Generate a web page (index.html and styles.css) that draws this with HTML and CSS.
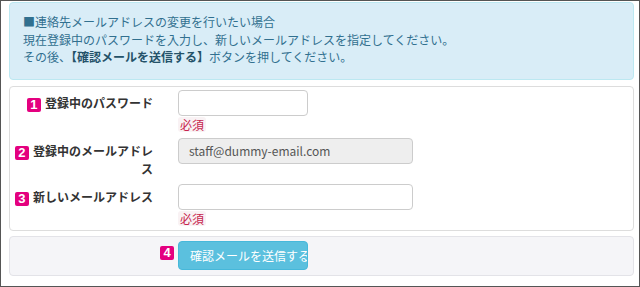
FILE: index.html
```html
<!DOCTYPE html>
<html>
<head>
    <title>メールアドレス変更</title>
    <meta charset=utf-8>
    <meta name=viewport content="width=device-width, initial-scale=1">
    <link rel="stylesheet" href="styles.css">
</head>
<body>
    <div id="frame">
        <div class="info">
            <p>■連絡先メールアドレスの変更を行いたい場合</p>
            <p>現在登録中のパスワードを入力し、新しいメールアドレスを指定してください。</p>
            <p>その後、<b>【確認メールを送信する】</b>ボタンを押してください。</p>
        </div>

        <div class="panel">
            <div class="row">
                <div class="label"><span class="num">1</span>登録中のパスワード</div>
                <div class="field">
                    <input type="password" class="inp short">
                    <span class="req">必須</span>
                </div>
            </div>
            <div class="row">
                <div class="label"><span class="num">2</span>登録中のメールアドレス</div>
                <div class="field">
                    <input type="text" class="inp long" value="staff@dummy-email.com" disabled>
                </div>
            </div>
            <div class="row">
                <div class="label"><span class="num">3</span>新しいメールアドレス</div>
                <div class="field">
                    <input type="text" class="inp long">
                    <span class="req">必須</span>
                </div>
            </div>
        </div>

        <div class="foot">
            <div class="label"><span class="num">4</span></div>
            <button class="send">確認メールを送信する</button>
        </div>
    </div>
</body>
</html>
```

FILE: styles.css
```css
body{
    margin: 0;
    font-family: "Noto Sans CJK JP", "Noto Sans", sans-serif;
    font-size: 12px;
    color: #333;
}
#frame{
    width: 640px;
    height: 287px;
    box-sizing: border-box;
    border: 1px solid #555;
    padding: 1px 5px 0 8px;
}
.info{
    background: #d9edf7;
    border: 1px solid #bce8f1;
    border-radius: 4px;
    color: #31708f;
    padding: 10px 13px 13px;
    line-height: 17.5px;
}
.info p{
    margin: 0;
}
.info b{
    color: #245269;
}
.panel{
    margin-top: 6px;
    background: #fff;
    border: 1px solid #ddd;
    border-radius: 4px;
    padding: 3px 0 4px;
}
.row{
    display: grid;
    grid-template-columns: 143px 1fr;
    column-gap: 25px;
    margin-bottom: 6px;
}
.row:last-child{
    margin-bottom: 0;
}
.label{
    text-align: right;
    font-weight: bold;
    font-size: 12px;
    line-height: 18px;
    padding-top: 4px;
    color: #333;
}
.num{
    display: inline-block;
    width: 14px;
    height: 14px;
    line-height: 14px;
    margin-right: 4px;
    background: #e4007f;
    color: #fff;
    border-radius: 2px;
    text-align: center;
    font-family: "Liberation Sans", sans-serif;
    font-size: 13px;
    vertical-align: -1px;
}
.field{
    display: flex;
    flex-direction: column;
    align-items: flex-start;
}
.inp{
    box-sizing: border-box;
    height: 26px;
    border: 1px solid #ccc;
    border-radius: 4px;
    padding: 0 10px;
    font-family: "Noto Sans CJK JP", "Noto Sans", sans-serif;
    font-size: 12px;
    color: #555;
    background: #fff;
}
.inp.short{
    width: 130px;
}
.inp.long{
    width: 235px;
}
.inp:disabled{
    background: #eee;
    color: #555;
}
.req{
    margin-top: 1px;
    padding: 0 2px;
    background: #f9f2f4;
    color: #c7254e;
    font-size: 12px;
    line-height: 15px;
    border-radius: 3px;
}
.foot{
    margin-top: 5px;
    height: 40px;
    box-sizing: border-box;
    background: #f5f5f8;
    border: 1px solid #e3e3e8;
    border-radius: 4px;
    display: flex;
    align-items: flex-start;
    padding-top: 4px;
    padding-left: 150px;
}
.foot .label{
    padding-top: 3px;
    line-height: 14px;
}
.send{
    width: 130px;
    height: 29px;
    border: 1px solid #46b8da;
    border-radius: 4px;
    background: #5bc0de;
    color: #fff;
    font-family: "Noto Sans CJK JP", "Noto Sans", sans-serif;
    font-size: 12px;
    text-align: left;
    padding: 0 0 0 11px;
    white-space: nowrap;
    overflow: hidden;
}
```
